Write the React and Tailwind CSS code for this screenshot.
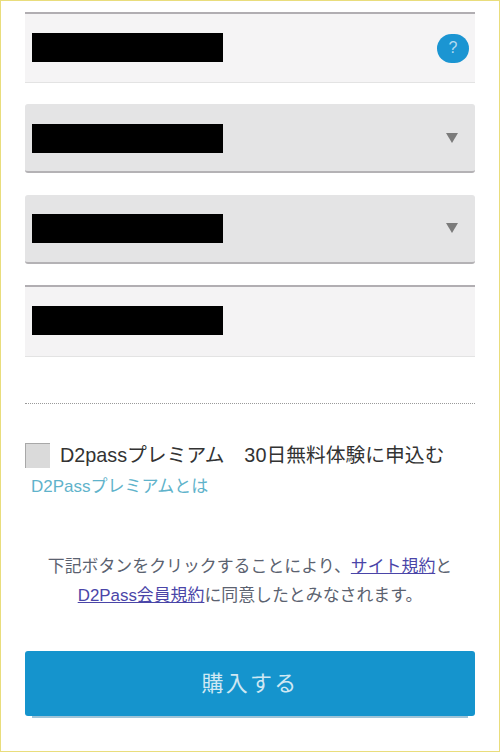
const font = { fontFamily: '"Liberation Sans", "Noto Sans CJK JP", sans-serif' };

function Redacted() {
  return <div className="w-[191px] h-[29px] bg-black" />;
}

function SelectField({ className }) {
  return (
    <div className={`h-[69px] bg-[#e4e4e5] rounded-[3px] border-b-2 border-[#b4b2b5] flex items-center justify-between pl-[7px] pr-[17px] ${className}`}>
      <Redacted />
      <svg width="12" height="11" viewBox="0 0 12 11">
        <polygon points="0,0 12,0 6,10" fill="#7b7b7b" />
      </svg>
    </div>
  );
}

export default function App() {
  return (
    <div
      className="w-[500px] h-[752px] bg-white border border-[#e9dd7c] px-6 pt-[11px] overflow-hidden"
      style={font}
    >
      <div className="h-[71px] bg-[#f5f4f5] border-t-2 border-[#b1aeb2] border-b border-b-[#e3e3e3] flex items-center justify-between pl-[7px] pr-[6px] pb-[2px]">
        <Redacted />
        <div className="w-[32px] h-[29px] mt-[2px] rounded-full bg-[#1b95d2] text-[#b5dcf0] text-[16px] flex items-center justify-center">?</div>
      </div>
      <SelectField className="mt-[21px] pt-[2px]" />
      <SelectField className="mt-[22px]" />
      <div className="mt-[21px] h-[72px] bg-[#f4f3f4] border-t-2 border-[#b1aeb2] border-b border-b-[#e3e3e3] flex items-center pl-[7px] pb-[3px]">
        <Redacted />
      </div>
      <div className="mt-[46px] border-t border-dotted border-[#9a9a9a]" />
      <div className="mt-[39px] flex items-center">
        <div className="w-[25px] h-[25px] bg-[#dadada] border-l border-t border-[#a8a8a8]" />
        <p className="ml-[10px] text-[19.8px] leading-[25px] text-[#333333] whitespace-nowrap">D2passプレミアム　30日無料体験に申込む</p>
      </div>
      <a className="block mt-[5px] ml-[6px] text-[17px] leading-[28px] text-[#5fb3cb]">D2Passプレミアムとは</a>
      <div className="mt-[51px] text-center text-[16.9px] leading-[29px] text-[#5b6270]">
        <p>下記ボタンをクリックすることにより、<a className="text-[#4a45a8] underline">サイト規約</a>と</p>
        <p><a className="text-[#4a45a8] underline">D2Pass会員規約</a>に同意したとみなされます。</p>
      </div>
      <button className="mt-[41px] w-full h-[65px] bg-[#1594cd] rounded-[3px] shadow-[0_9px_0_-7px_#9fc4d8] text-[#cfe8f3] text-[22px] tracking-[0.1em] flex items-center justify-center">
        購入する
      </button>
    </div>
  );
}
